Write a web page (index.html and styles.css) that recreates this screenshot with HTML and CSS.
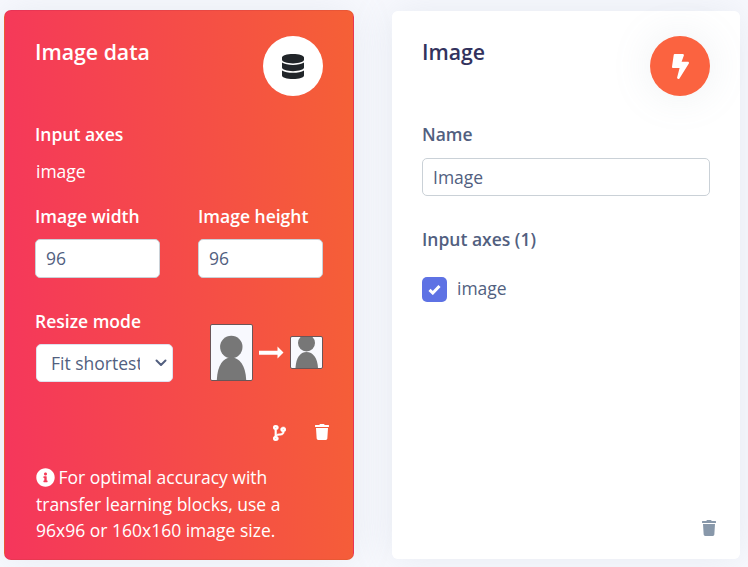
FILE: index.html
```html
<!DOCTYPE html>
<html lang="en">
<head>
<meta charset="utf-8">
<title>Image data</title>
<link rel="stylesheet" href="styles.css">
</head>
<body>
<main class="blocks">
  <section class="card card-input">
    <header class="card-head">
      <h2>Image data</h2>
      <span class="badge"><svg width="22" height="25" viewBox="0 0 448 512" preserveAspectRatio="none"><path d="M448 73.143v45.714C448 159.143 347.667 192 224 192S0 159.143 0 118.857V73.143C0 32.857 100.333 0 224 0s224 32.857 224 73.143zM448 176v102.857C448 319.143 347.667 352 224 352S0 319.143 0 278.857V176c48.125 33.143 136.208 48.572 224 48.572S399.874 209.143 448 176zm0 160v102.857C448 479.143 347.667 512 224 512S0 479.143 0 438.857V336c48.125 33.143 136.208 48.572 224 48.572S399.874 369.143 448 336z"/></svg></span>
    </header>
    <div class="label">Input axes</div>
    <div class="axis">image</div>
    <div class="sizes">
      <label class="field"><span class="label">Image width</span><input class="control" value="96"></label>
      <label class="field"><span class="label">Image height</span><input class="control" value="96"></label>
    </div>
    <div class="resize">
      <div class="mode">
        <div class="label">Resize mode</div>
        <div class="select"><span class="select-text">Fit shortest</span><svg width="12" height="8" viewBox="0 0 12 8"><path d="M1.5 1.5 6 6l4.5-4.5" fill="none" stroke="#525f7f" stroke-width="2" stroke-linecap="round" stroke-linejoin="round"/></svg></div>
      </div>
      <div class="preview">
        <svg width="43" height="57" viewBox="0 0 43 57"><rect x=".5" y=".5" width="42" height="56" rx="1.5" fill="#f8f9fe" stroke="#6b5557"/><circle cx="21.3" cy="23" r="11.2" fill="#777"/><path d="M6.800 56C7.500 41.500 13 33.500 21.300 33.500S35.500 41.500 36.200 56z" fill="#777"/></svg>
        <svg width="25" height="13" viewBox="0 0 25 13"><path d="M0 4.700h18.500V.5l6 6-6 6V8.700H0z" fill="#fff"/></svg>
        <svg width="33" height="33" viewBox="0 0 33 33"><rect x=".5" y=".5" width="32" height="32" rx="1.5" fill="#f8f9fe" stroke="#6b5557"/><path d="M10.500 1h12a8.500 8.500 0 1 1-12 0z" fill="#777"/><path d="M5.500 32C6 22 10 16 16.500 16S27.500 22 28 32z" fill="#777"/></svg>
      </div>
    </div>
    <div class="actions">
      <svg class="branch" width="13" height="16" viewBox="0 0 384 512" preserveAspectRatio="none"><path stroke="#fff" stroke-width="16" d="M384 144c0-44.200-35.800-80-80-80s-80 35.800-80 80c0 36.400 24.300 67.100 57.500 76.800-.6 16.100-4.200 28.500-11 36.900-15.400 19.200-49.300 22.400-85.200 25.700-28.200 2.600-57.400 5.400-81.300 16.900v-144c32.500-10.200 56-40.500 56-76.300 0-44.200-35.800-80-80-80S0 35.800 0 80c0 35.800 23.500 66.100 56 76.300v199.300C23.500 365.900 0 396.200 0 432c0 44.200 35.800 80 80 80s80-35.800 80-80c0-34-21.200-63.100-51.200-74.600 3.100-5.200 7.800-9.800 14.900-13.400 16.200-8.200 40.400-10.400 66.100-12.800 42.200-3.900 90-8.400 118.200-43.400 14-17.400 21.100-39.800 21.600-67.900 31.600-10.800 54.400-40.700 54.400-75.900zM80 64c8.800 0 16 7.200 16 16s-7.200 16-16 16-16-7.200-16-16 7.200-16 16-16zm0 384c-8.800 0-16-7.200-16-16s7.200-16 16-16 16 7.200 16 16-7.200 16-16 16zm224-320c8.800 0 16 7.200 16 16s-7.200 16-16 16-16-7.200-16-16 7.200-16 16-16z"/></svg>
      <svg width="14" height="16" viewBox="0 0 448 512"><path d="M432 32H312l-9.400-18.700A24 24 0 0 0 281.100 0H166.800a23.720 23.720 0 0 0-21.400 13.300L136 32H16A16 16 0 0 0 0 48v32a16 16 0 0 0 16 16h416a16 16 0 0 0 16-16V48a16 16 0 0 0-16-16zM53.200 467a48 48 0 0 0 47.900 45h245.800a48 48 0 0 0 47.900-45L416 128H32z"/></svg>
    </div>
    <p class="hint"><svg width="19" height="19" viewBox="0 0 512 512"><path d="M256 8C119.043 8 8 119.083 8 256c0 136.997 111.043 248 248 248s248-111.003 248-248C504 119.083 392.957 8 256 8zm0 110c23.196 0 42 18.804 42 42s-18.804 42-42 42-42-18.804-42-42 18.804-42 42-42zm56 254c0 6.627-5.373 12-12 12h-88c-6.627 0-12-5.373-12-12v-24c0-6.627 5.373-12 12-12h12v-64h-12c-6.627 0-12-5.373-12-12v-24c0-6.627 5.373-12 12-12h64c6.627 0 12 5.373 12 12v100h12c6.627 0 12 5.373 12 12v24z"/></svg>For optimal accuracy with<br>transfer learning blocks, use a<br>96x96 or 160x160 image size.</p>
  </section>

  <section class="card card-block">
    <header class="card-head">
      <h2>Image</h2>
      <span class="badge"><svg width="17" height="25" viewBox="0 0 320 512" preserveAspectRatio="none"><path d="M296 160H180.600l42.600-129.800C227.200 15 215.700 0 200 0H56C44 0 33.800 8.900 32.200 20.800l-32 240C-1.700 275.200 9.500 288 24 288h118.700L96.600 482.500c-3.600 15.200 8 29.500 23.300 29.500 8.400 0 16.400-4.400 20.800-12l176-304c9.300-15.900-2.200-36-20.700-36z"/></svg></span>
    </header>
    <label class="field"><span class="label">Name</span><input class="control" value="Image"></label>
    <div class="label axes-label">Input axes (1)</div>
    <div class="check">
      <span class="box"><svg width="13" height="11" viewBox="0 0 13 11"><path d="M1.500 5.800 4.800 9l6.700-7" fill="none" stroke="#fff" stroke-width="3"/></svg></span>
      <span class="check-text">image</span>
    </div>
    <svg class="remove" width="14" height="16" viewBox="0 0 448 512"><path d="M432 32H312l-9.400-18.700A24 24 0 0 0 281.100 0H166.800a23.720 23.720 0 0 0-21.400 13.300L136 32H16A16 16 0 0 0 0 48v32a16 16 0 0 0 16 16h416a16 16 0 0 0 16-16V48a16 16 0 0 0-16-16zM53.200 467a48 48 0 0 0 47.900 45h245.800a48 48 0 0 0 47.900-45L416 128H32z"/></svg>
  </section>
</main>
</body>
</html>
```
FILE: styles.css
```css
* { box-sizing: border-box; }
body {
  margin: 0;
  height: 567px;
  overflow: hidden;
  background: #f8f9fe;
  color: #525f7f;
  font: 400 17.5px/26px "Open Sans", sans-serif;
}
svg { display: block; flex: none; }
.blocks {
  display: flex;
  gap: 37px;
  padding: 10px 7px 0 4px;
}
.card {
  display: flex;
  flex-direction: column;
  width: 350px;
  height: 550px;
  flex: none;
  padding: 25px 30px 0;
  border: 1px solid rgba(0, 0, 0, .05);
  border-radius: 7px;
  box-shadow: 0 0 40px rgba(136, 152, 170, .15);
}
.card-input {
  color: #fff;
  background: linear-gradient(87deg, #f5365c, #f56036);
}
.card-block {
  border-color: transparent;
  background: #fff;
  background-clip: padding-box;
}
.card-head {
  display: flex;
  justify-content: space-between;
  height: 85px;
}
h2 {
  margin: 0;
  font-size: 21.25px;
  line-height: 31px;
  font-weight: 600;
}
.card-block h2 { color: #32325d; }
.badge {
  display: flex;
  align-items: center;
  justify-content: center;
  width: 60px;
  height: 60px;
  border-radius: 50%;
  background: #fff;
  fill: #212529;
}
.card-block .badge {
  background: #fb6340;
  fill: #fff;
  box-shadow: 0 0 40px rgba(136, 152, 170, .15);
}
.label {
  display: block;
  font-weight: 600;
}
.axis { margin: 11px 0 19px 1px; }
.sizes { display: flex; gap: 38px; }
.sizes .field { width: 125px; }
.control {
  display: block;
  width: 100%;
  height: 39px;
  margin-top: 10px;
  padding: 0 10px 2px;
  border: 1px solid #cad1d7;
  border-radius: 5px;
  background: #fff;
  color: #525f7f;
  font: 400 17.5px/26px "Open Sans", sans-serif;
}
.resize {
  display: flex;
  justify-content: space-between;
  margin-top: 30px;
}
.select {
  display: flex;
  align-items: center;
  justify-content: space-between;
  width: 137px;
  height: 38px;
  margin: 10px 0 0 1px;
  padding: 0 5px 0 14px;
  border: 1px solid #dfe0ee;
  border-radius: 5px;
  background: #fff;
  color: #525f7f;
}
.select-text {
  width: 89px;
  overflow: hidden;
  white-space: nowrap;
}
.preview {
  display: flex;
  align-items: center;
  gap: 6px;
  height: 57px;
  margin-top: 16px;
}
.actions {
  display: flex;
  justify-content: flex-end;
  gap: 29px;
  margin: 42px -6px 0 0;
  fill: #fff;
}
.branch { margin-top: 1px; }
.hint {
  margin: 23px 0 0 1px;
  line-height: 26.5px;
  white-space: nowrap;
}
.hint svg {
  display: inline-block;
  margin-right: 3.5px;
  vertical-align: -3px;
  fill: #fff;
}
.card-block .control { height: 38px; margin-top: 11px; padding-bottom: 0; }
.axes-label { margin-top: 30px; }
.check {
  display: flex;
  align-items: center;
  gap: 10px;
  margin-top: 24px;
}
.check-text { margin: -1px 0 1px; }
.box {
  display: flex;
  align-items: center;
  justify-content: center;
  width: 25px;
  height: 25px;
  border-radius: 5px;
  background: #5e72e4;
}
.remove {
  margin: auto -6px 23px auto;
  fill: #8898aa;
}
```
